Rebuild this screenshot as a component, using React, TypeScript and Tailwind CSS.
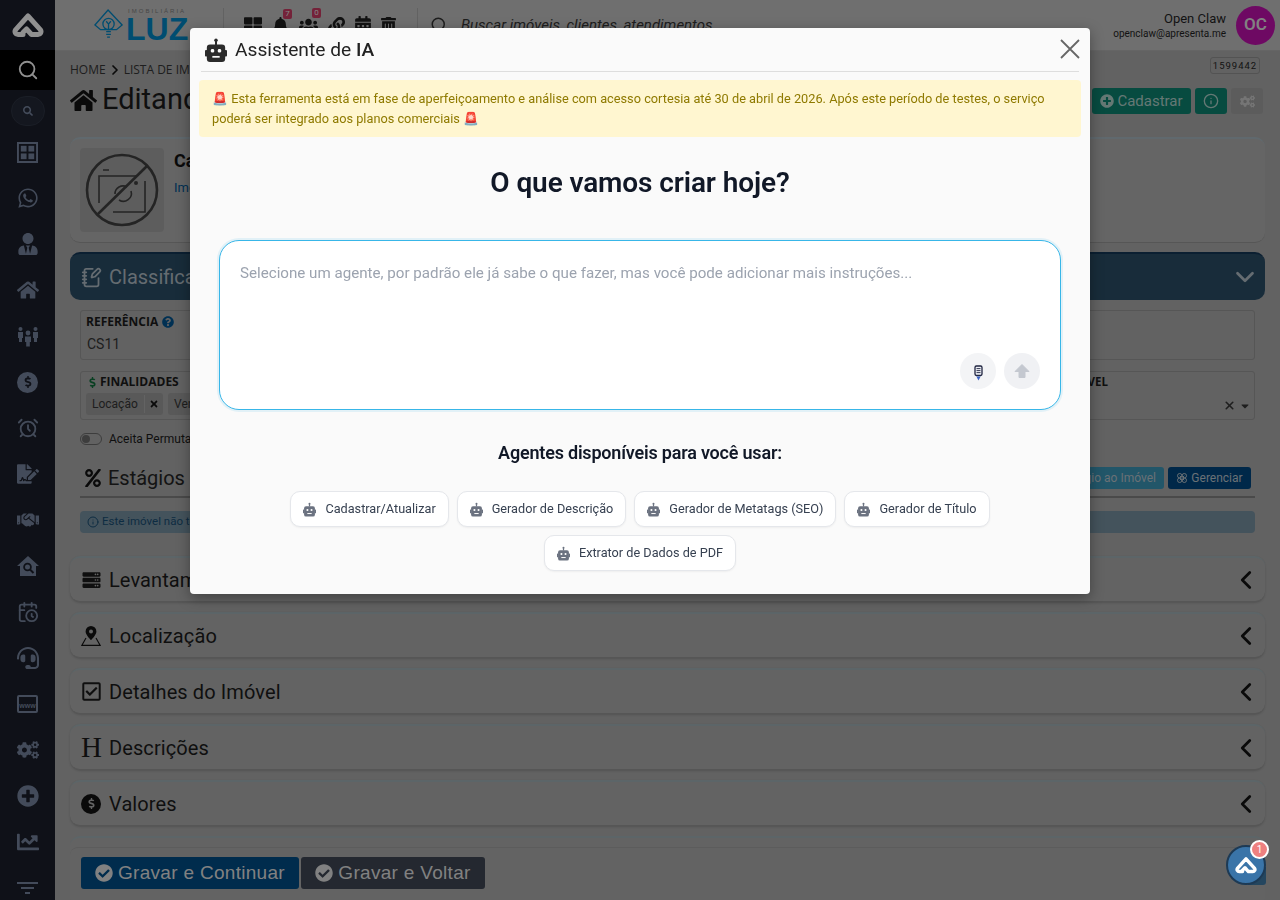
import React from 'react';
import {
  FaHome, FaSearch, FaWhatsapp, FaUserTie, FaFileSignature, FaHandshake, FaCogs, FaPlusCircle,
  FaChartLine, FaBell, FaLink, FaCalendarAlt, FaTrashAlt, FaThLarge, FaCheckCircle, FaTimes, FaQuestionCircle,
  FaRegCheckSquare, FaPercent, FaServer, FaHeadset, FaUsers,
  FaDollarSign, FaCaretDown,
} from 'react-icons/fa';
import { LuInfo, LuX, LuSearch, LuFlower, LuNotebookPen, LuChevronLeft, LuChevronDown, LuChevronRight, LuAlarmClock, LuCalendarClock } from 'react-icons/lu';

const BotIcon = ({ className }: { className?: string }) => (
  <svg viewBox="0 0 24 26" className={className} fill="currentColor">
    <circle cx="12" cy="2.4" r="1.9" />
    <rect x="10.9" y="3" width="2.2" height="4.5" />
    <rect x="2" y="7" width="20" height="19" rx="3.5" />
    <rect x="0" y="13" width="2.6" height="7" rx="1" />
    <rect x="21.4" y="13" width="2.6" height="7" rx="1" />
    <rect x="6.4" y="12" width="3.6" height="3.8" rx="1.4" fill="#fafafa" />
    <rect x="14" y="12" width="3.6" height="3.8" rx="1.4" fill="#fafafa" />
    <rect x="8" y="19.5" width="8" height="1.9" fill="#fafafa" />
  </svg>
);

const BrandMark = ({ className }: { className?: string }) => (
  <svg viewBox="0 0 32 26" className={className} fill="none" stroke="currentColor" strokeWidth="5" strokeLinejoin="round" strokeLinecap="round">
    <path d="M11 22.5H6a3 3 0 0 1-2.5-4.6L16 4l12.5 13.9A3 3 0 0 1 26 22.5h-6.5l-5-5.5-3.5 3.5" />
  </svg>
);

const NoPhoto = () => (
  <svg viewBox="0 0 74 74" className="w-[74px] h-[74px]" fill="none" stroke="#3d3d3d">
    <circle cx="37" cy="37" r="35" strokeWidth="2.6" />
    <path d="M62 13 12 62" strokeWidth="2.6" />
    <path d="M14 50V23h38M60 28v31H28M18 17h6" strokeWidth="1.6" />
    <path d="M30 41a8 8 0 0 1 12-7M46 38a8 8 0 0 1-12 9" strokeWidth="1.6" />
    <circle cx="51" cy="30" r="2" fill="#3d3d3d" stroke="none" />
  </svg>
);

const WindowIcon = () => (
  <svg viewBox="0 0 22 22" className="w-[21px] h-[21px]" fill="currentColor">
    <path fillRule="evenodd" d="M0 0h22v22H0Zm2 2v18h18V2Z" />
    <rect x="4" y="4" width="6" height="6" />
    <rect x="12" y="4" width="6" height="6" />
    <rect x="4" y="12" width="6" height="6" />
    <rect x="12" y="12" width="6" height="6" />
  </svg>
);

const PeopleIcon = () => (
  <svg viewBox="0 0 22 22" className="w-[22px] h-[22px]" fill="currentColor">
    <circle cx="3.5" cy="4" r="2" />
    <circle cx="18.5" cy="4" r="2" />
    <circle cx="11" cy="8" r="2.4" />
    <path d="M1 7h5v6H5v4H2v-4H1ZM16 7h5v6h-1v4h-3v-4h-1ZM8 11.5h6V17h-1.2v4.5H9.2V17H8Z" />
  </svg>
);

const HomeSearchIcon = () => (
  <svg viewBox="0 0 22 22" className="w-[22px] h-[22px]">
    <path d="M11 1 22 11h-3v10H3V11H0Z" fill="currentColor" />
    <circle cx="10.5" cy="12" r="3.4" fill="none" stroke="#191d28" strokeWidth="1.8" />
    <path d="m13 14.5 3.5 3.5" stroke="#191d28" strokeWidth="2" />
  </svg>
);

const MapPinIcon = () => (
  <svg viewBox="0 0 20 20" className="w-[20px] h-[20px]" fill="none">
    <path d="M10 0a5.4 5.4 0 0 0-5.4 5.4C4.6 9 10 14 10 14s5.4-5 5.4-8.6A5.4 5.4 0 0 0 10 0Z" fill="#111" />
    <circle cx="10" cy="5.4" r="2" fill="#a6a6a6" />
    <path d="M5 12 .8 19.4h18.4L15 12" stroke="#111" strokeWidth="1.1" />
  </svg>
);

const MicIcon = () => (
  <svg viewBox="0 0 9 16" className="w-[9px] h-[16px]" fill="none">
    <rect x="1" y="1" width="7" height="9.5" rx="1.4" fill="#eef0f6" stroke="#1f2440" strokeWidth="1.3" />
    <path d="M2.5 3.6h4M2.5 5.6h4M2.5 7.6h4" stroke="#1f2440" strokeWidth="0.9" />
    <path d="M2.4 11.4h4.2L4.5 15.5Z" fill="#3b62c4" />
  </svg>
);

const sideIcons = [
  'window', FaWhatsapp, FaUserTie, FaHome, 'people', null, LuAlarmClock, FaFileSignature, FaHandshake,
  'homesearch', LuCalendarClock, FaHeadset, 'www', FaCogs, FaPlusCircle, FaChartLine, 'filter',
] as const;

function Sidebar() {
  return (
    <aside className="w-[55px] shrink-0 h-[900px] bg-[#191d28] flex flex-col items-center overflow-hidden text-[#717e96]">
      <div className="h-[50px] shrink-0 w-full flex items-center justify-center">
        <BrandMark className="w-[32px] h-[26px] text-[#f0f0f0]" />
      </div>
      <div className="h-[40px] shrink-0 w-full bg-black flex items-center justify-center text-[#f0f0f0]">
        <LuSearch className="w-[22px] h-[22px]" />
      </div>
      <div className="mt-[6px] shrink-0 w-[34px] h-[30px] rounded-full border border-[#2c3240] bg-[#222735] flex items-center justify-center">
        <FaSearch className="w-[10px] h-[10px]" />
      </div>
      {sideIcons.map((Icon, i) => (
        <div key={i} className={`h-[46px] w-full flex items-center justify-center shrink-0 ${i === 0 ? 'mt-[3px]' : ''}`}>
          {Icon === null ? (
            <span className="w-[21px] h-[21px] rounded-full bg-[#717e96] text-[#191d28] flex items-center justify-center">
              <FaDollarSign className="w-[12px] h-[12px]" />
            </span>
          ) : Icon === 'window' ? (
            <WindowIcon />
          ) : Icon === 'people' ? (
            <PeopleIcon />
          ) : Icon === 'homesearch' ? (
            <HomeSearchIcon />
          ) : Icon === 'www' ? (
            <span className="w-[21px] h-[18px] border-2 border-[#717e96] rounded-[2px] text-[7px] leading-[7px] font-bold pt-[5px] text-center font-['Liberation_Sans',sans-serif]">www</span>
          ) : Icon === 'filter' ? (
            <span className="flex flex-col items-center gap-[3px]">
              <span className="w-[21px] h-[2px] bg-[#717e96]" />
              <span className="w-[13px] h-[2px] bg-[#717e96]" />
              <span className="w-[5px] h-[2px] bg-[#717e96]" />
            </span>
          ) : (
            <Icon className="w-[22px] h-[22px]" />
          )}
        </div>
      ))}
    </aside>
  );
}

const Badge = ({ n }: { n: string }) => (
  <span className="absolute -top-[8px] -right-[3px] w-[9px] h-[10px] rounded-[2px] bg-[#c23a60] text-[8px] leading-[10px] text-center text-[#ddd]">{n}</span>
);

function Header() {
  return (
    <header className="h-[51px] shrink-0 bg-[#b9b9b9] border-b border-[#a9a9a9] flex items-center pl-[39px] pr-[5px]">
      <div className="w-[129px] flex items-center gap-[2px]">
        <svg viewBox="0 0 32 36" className="w-[30px] h-[34px]" fill="none" stroke="#0080bc" strokeWidth="1.4">
          <path d="M1 18 15 2l15 16-6 5H7Z" />
          <circle cx="15.5" cy="17" r="6" />
          <path d="M13 25h5M13 28h5M14 31h3M15.5 23v-6M13 14l2.5 3 2.5-3" />
        </svg>
        <div className="flex flex-col items-center leading-none font-['Liberation_Sans',sans-serif] text-[#0080bc]">
          <span className="text-[6px] tracking-[2px] text-[#777] mt-[3px]">IMOBILIÁRIA</span>
          <span className="text-[32px] font-bold leading-[32px] -mt-[1px]">LUZ</span>
        </div>
      </div>
      <div className="h-[34px] w-px bg-[#a3a3a3]" />
      <div className="ml-[20px] flex items-center gap-[10px] text-[#1e1e1e]">
        <FaThLarge className="w-[18px] h-[18px]" />
        <span className="relative"><FaBell className="w-[17px] h-[17px]" /><Badge n="7" /></span>
        <span className="relative"><FaUsers className="w-[19px] h-[19px]" /><Badge n="0" /></span>
        <FaLink className="w-[17px] h-[17px]" />
        <FaCalendarAlt className="w-[16px] h-[18px]" />
        <FaTrashAlt className="w-[15px] h-[17px]" />
      </div>
      <div className="ml-[21px] h-[34px] w-px bg-[#a3a3a3]" />
      <LuSearch className="ml-[12px] w-[18px] h-[18px] text-[#333]" />
      <span className="ml-[13px] text-[15px] italic text-[#333]">Buscar imóveis, clientes, atendimentos...</span>
      <div className="ml-auto flex items-center gap-[10px]">
        <div className="text-right">
          <div className="text-[13px] leading-[17px] text-[#1f1f1f]">Open Claw</div>
          <div className="text-[10px] leading-[13px] text-[#1f1f1f]">openclaw@apresenta.me</div>
        </div>
        <div className="w-[39px] h-[39px] rounded-full bg-[#b80fa6] text-[#d8d8d8] flex items-center justify-center text-[17px] font-semibold">OC</div>
      </div>
    </header>
  );
}

function Accordion({ icon, label }: { icon: React.ReactNode; label: string }) {
  return (
    <div className="h-[46px] rounded-[10px] bg-[#a6a6a6] border-t-2 border-[#9aa9ad] border-b border-b-[#8f8f8f] shadow-[0_1px_2px_rgba(0,0,0,0.15)] flex items-center pl-[11px] pr-[4px] text-[#1a1a1a]">
      <span className="w-[28px] flex items-center">{icon}</span>
      <span className="text-[20px] tracking-[0.1px]">{label}</span>
      <LuChevronLeft className="ml-auto w-[30px] h-[30px] text-[#111]" strokeWidth={2.2} />
    </div>
  );
}

function Page() {
  return (
    <main className="flex-1 min-w-0 h-[900px] bg-[#a3a3a3] overflow-hidden">
      <Header />
      <div className="px-[15px]">
        <div className="h-[36px] flex items-center justify-between pr-[5px]">
          <div className="flex items-center gap-[1px] text-[12px] text-[#333] font-['Open_Sans',sans-serif] pt-[1px]">
            HOME <LuChevronRight className="w-[16px] h-[16px] text-[#111]" strokeWidth={2.6} /> LISTA DE IMÓVEIS
          </div>
          <span className="-mt-[8px] border border-[#8a8a8a] rounded-[3px] h-[17px] w-[50px] text-[9.5px] leading-[15px] text-center tracking-[1px] text-[#222]">1599442</span>
        </div>
        <div className="h-[36px] flex items-center -mt-[5px]">
          <FaHome className="w-[27px] h-[27px] text-[#111]" />
          <span className="ml-[5px] text-[29px] text-[#1a1a1a]">Editando Imóvel</span>
          <div className="ml-auto flex items-center gap-[4px] pr-[2px] pt-[2px] text-[#a8c8c2]">
            <button className="h-[26px] w-[99px] rounded-[3px] bg-[#0c7d6c] flex items-center justify-center gap-[3px] text-[15px]">
              <FaPlusCircle className="w-[14px] h-[14px]" /> Cadastrar
            </button>
            <button className="h-[26px] w-[32px] rounded-[3px] bg-[#0c7d6c] flex items-center justify-center">
              <LuInfo className="w-[16px] h-[16px]" />
            </button>
            <button className="h-[26px] w-[32px] rounded-[3px] bg-[#9a9a9a] flex items-center justify-center text-[#c4c4c4]">
              <FaCogs className="w-[15px] h-[15px]" />
            </button>
          </div>
        </div>

        <div className="mt-[19px] h-[106px] rounded-[10px] bg-[#a9a9a9] border-t-2 border-[#a0b0b8] border-b border-b-[#8f8f8f] px-[10px] pt-[9px] flex gap-[10px]">
          <div className="w-[84px] h-[84px] rounded-[4px] bg-[#9c9c9c] flex items-center justify-center"><NoPhoto /></div>
          <div>
            <div className="text-[18px] font-bold text-[#111] leading-[26px]">Casa</div>
            <div className="mt-[4px] text-[13px] text-[#00508a]">Imóvel</div>
          </div>
        </div>

        <div className="mt-[9px] h-[48px] rounded-[10px] bg-[#284a62] border-t-2 border-[#133452] flex items-center pl-[11px] pr-[5px] text-[#a8b4bc]">
          <LuNotebookPen className="w-[21px] h-[21px]" />
          <span className="ml-[7px] text-[20px]">Classificação</span>
          <LuChevronDown className="ml-auto w-[30px] h-[30px]" strokeWidth={2.2} />
        </div>

        <div className="px-[10px]">
          <div className="mt-[10px] h-[50px] border border-[#8f8f8f] rounded-[3px] px-[5px] pt-[2px]">
            <div className="flex items-center gap-[4px] text-[12px] font-bold text-[#1a1a1a] font-['Open_Sans',sans-serif]">
              REFERÊNCIA <FaQuestionCircle className="w-[12px] h-[12px] text-[#00508a]" />
            </div>
            <div className="text-[14px] text-[#333] mt-[3px] ml-[1px]">CS11</div>
          </div>
          <div className="mt-[11px] h-[49px] border border-[#8f8f8f] rounded-[3px] px-[6px] pt-[1px] relative">
            <div className="flex items-center gap-[2px] text-[12px] font-bold text-[#1a1a1a] font-['Open_Sans',sans-serif]">
              <FaDollarSign className="w-[11px] h-[11px] text-[#0f6a3a]" /> FINALIDADES
              <span className="ml-auto mr-[140px] text-[11.5px]">TIPO DO IMÓVEL</span>
            </div>
            <div className="mt-[2px] flex gap-[5px] text-[12px] text-[#333] -ml-[1px]">
              <span className="h-[22px] w-[77px] bg-[#949494] rounded-[3px] flex items-center pl-[6px]">
                Locação
                <span className="ml-auto h-[18px] w-[19px] border-l border-[#a6a6a6] flex items-center justify-center">
                  <FaTimes className="w-[10px] h-[10px] text-[#111]" />
                </span>
              </span>
              <span className="h-[22px] w-[77px] bg-[#949494] rounded-[3px] flex items-center pl-[6px]">Venda</span>
              <span className="ml-auto flex items-center gap-[3px] text-[#333] mt-[6px] -mr-[3px] h-[13px]">
                <LuX className="w-[13px] h-[13px]" strokeWidth={3} />
                <FaCaretDown className="w-[12px] h-[12px]" />
              </span>
            </div>
          </div>
          <div className="mt-[12px] h-[14px] flex items-center gap-[7px] text-[12px] text-[#1a1a1a]">
            <span className="w-[22px] h-[12px] rounded-full border border-[#666] flex items-center pl-[1px]"><span className="w-[8px] h-[8px] rounded-full bg-[#666]" /></span>
            Aceita Permuta
          </div>
          <div className="mt-[20px] h-[32px] border-b-2 border-[#7c7c7c] flex items-center pl-[4px] pb-[6px]">
            <FaPercent className="w-[18px] h-[18px] text-[#111]" />
            <span className="ml-[6px] text-[20px] text-[#222]">Estágios do Imóvel</span>
            <div className="ml-auto flex gap-[4px] pr-[4px] text-[12px] text-[#b0bcc4]">
              <button className="h-[22px] w-[190px] bg-[#3a8fb0] rounded-[3px] text-right pr-[8px]">Vincular Estágio ao Imóvel</button>
              <button className="h-[22px] w-[83px] bg-[#00437a] rounded-[3px] flex items-center justify-center gap-[3px]"><LuFlower className="w-[12px] h-[12px]" /> Gerenciar</button>
            </div>
          </div>
          <div className="mt-[13px] h-[22px] rounded-[4px] bg-[#728a9a] flex items-center pl-[7px] gap-[3px] text-[11.5px] text-[#174a6e]">
            <LuInfo className="w-[12px] h-[12px]" /> Este imóvel não tem estágio definido
          </div>
        </div>

        <div className="mt-[23px] flex flex-col gap-[10px]">
          <Accordion icon={<FaServer className="w-[21px] h-[18px]" />} label="Levantamento" />
          <Accordion icon={<MapPinIcon />} label="Localização" />
          <Accordion icon={<FaRegCheckSquare className="w-[21px] h-[21px]" />} label="Detalhes do Imóvel" />
          <Accordion icon={<span className="font-['Liberation_Serif',serif] text-[29px] leading-none">H</span>} label="Descrições" />
          <Accordion
            icon={
              <span className="w-[20px] h-[20px] rounded-full bg-[#111] text-[#a6a6a6] flex items-center justify-center">
                <FaDollarSign className="w-[11px] h-[11px]" />
              </span>
            }
            label="Valores"
          />
        </div>

        <div className="mt-[10px] rounded-[10px] bg-[#a6a6a6] border-t-2 border-[#9aa9ad] h-[70px] pt-[9px]">
          <div className="border-t border-[#999] rounded-t-[8px] pl-[11px] pt-[9px] flex gap-[2px] text-[19px] tracking-[0.3px] font-['Liberation_Sans',sans-serif] text-[#d8d8d8]">
            <button className="h-[32px] w-[218px] rounded-[3px] bg-[#004a80] flex items-center justify-center gap-[5px]"><FaCheckCircle className="w-[18px] h-[18px]" /> Gravar e Continuar</button>
            <button className="h-[32px] w-[184px] rounded-[3px] bg-[#3c4350] flex items-center justify-center gap-[5px]"><FaCheckCircle className="w-[18px] h-[18px]" /> Gravar e Voltar</button>
          </div>
        </div>
      </div>
    </main>
  );
}

const agents = ['Cadastrar/Atualizar', 'Gerador de Descrição', 'Gerador de Metatags (SEO)', 'Gerador de Título', 'Extrator de Dados de PDF'];

function AssistantModal() {
  return (
    <div className="absolute left-[190px] top-[28px] w-[900px] h-[566px] z-50 rounded-[4px] bg-[#fafafa] shadow-[0_4px_14px_rgba(0,0,0,0.35)] px-[9px] pt-[8px]">
      <div className="mx-[2px] h-[36px] border-b border-[#dedede] flex items-start pl-[4px]">
        <BotIcon className="w-[22px] h-[24px] text-[#2b2b2b] mt-[2px]" />
        <span className="ml-[8px] text-[19.2px] leading-[28px] text-[#222]">Assistente de <b className="font-medium">IA</b></span>
        <button className="ml-auto mt-[3px] -mr-[1px] text-[#666]">
          <svg viewBox="0 0 20 20" className="w-[20px] h-[20px]" fill="none" stroke="currentColor" strokeWidth="1.8">
            <path d="M1 1l18 18M19 1 1 19" />
          </svg>
        </button>
      </div>
      <div className="mt-[8px] h-[57px] rounded-[4px] bg-[#fff6d0] px-[13px] py-[9px] text-[12.75px] leading-[20px] text-[#8f7a00]">
        🚨 Esta ferramenta está em fase de aperfeiçoamento e análise com acesso cortesia até 30 de abril de 2026. Após este período de testes, o serviço poderá ser integrado aos planos comerciais 🚨
      </div>
      <h2 className="mt-[28px] text-center text-[28px] leading-[36px] font-semibold text-[#111827] tracking-[-0.1px]">O que vamos criar hoje?</h2>
      <div className="mt-[39px] mx-[20px] h-[170px] rounded-[20px] bg-white border border-[#38b6e8] shadow-[0_0_0_2px_rgba(56,182,232,0.12)] flex flex-col px-[20px] pt-[20px] pb-[20px]">
        <p className="text-[15.15px] leading-[24px] text-[#9ca3af]">Selecione um agente, por padrão ele já sabe o que fazer, mas você pode adicionar mais instruções...</p>
        <div className="mt-auto flex justify-end gap-[8px]">
          <span className="w-[36px] h-[36px] rounded-full bg-[#f3f4f6] flex items-center justify-center pt-[4px]"><MicIcon /></span>
          <span className="w-[36px] h-[36px] rounded-full bg-[#f0f1f4] flex items-center justify-center text-[#c4c8d0]">
            <svg viewBox="0 0 16 16" className="w-[16px] h-[16px]" fill="currentColor" stroke="currentColor" strokeWidth="1" strokeLinejoin="round">
              <path d="M8 1.5 15 8.5H11V14.5H5V8.5H1Z" />
            </svg>
          </span>
        </div>
      </div>
      <h3 className="mt-[30px] text-center text-[18px] leading-[26px] font-semibold tracking-[-0.2px] text-[#111827]">Agentes disponíveis para você usar:</h3>
      <div className="mt-[25px] mx-[20px] flex flex-wrap justify-center gap-[8px]">
        {agents.map((a) => (
          <button key={a} className="h-[36px] px-[12px] rounded-[10px] bg-white border border-[#e5e7eb] shadow-[0_1px_2px_rgba(0,0,0,0.05)] flex items-center gap-[9px] text-[12.7px] text-[#374151]">
            <BotIcon className="w-[13px] h-[15px] text-[#6b7280]" />
            <span>{a}</span>
          </button>
        ))}
      </div>
    </div>
  );
}

export default function App() {
  return (
    <div className="relative w-[1280px] h-[900px] overflow-hidden flex font-['Roboto',sans-serif]">
      <Sidebar />
      <Page />
      <div className="absolute inset-0 z-40 bg-black/40 backdrop-blur-[0.5px]" />
      <AssistantModal />
      <div className="absolute left-[1226px] top-[845px] w-[40px] h-[40px] z-50">
        <div className="absolute right-0 bottom-0 w-[18px] h-[18px] rounded-br-[3px] bg-[#24465f]" />
        <div className="absolute inset-0 rounded-full bg-[#3a74a8] border-2 border-[#1d3a55] flex items-center justify-center">
          <BrandMark className="w-[22px] h-[18px] text-white" />
        </div>
        <span className="absolute -top-[5px] -right-[3px] w-[19px] h-[19px] rounded-full bg-[#ee8080] border-2 border-white text-white text-[10px] leading-[15px] text-center">1</span>
      </div>
    </div>
  );
}
